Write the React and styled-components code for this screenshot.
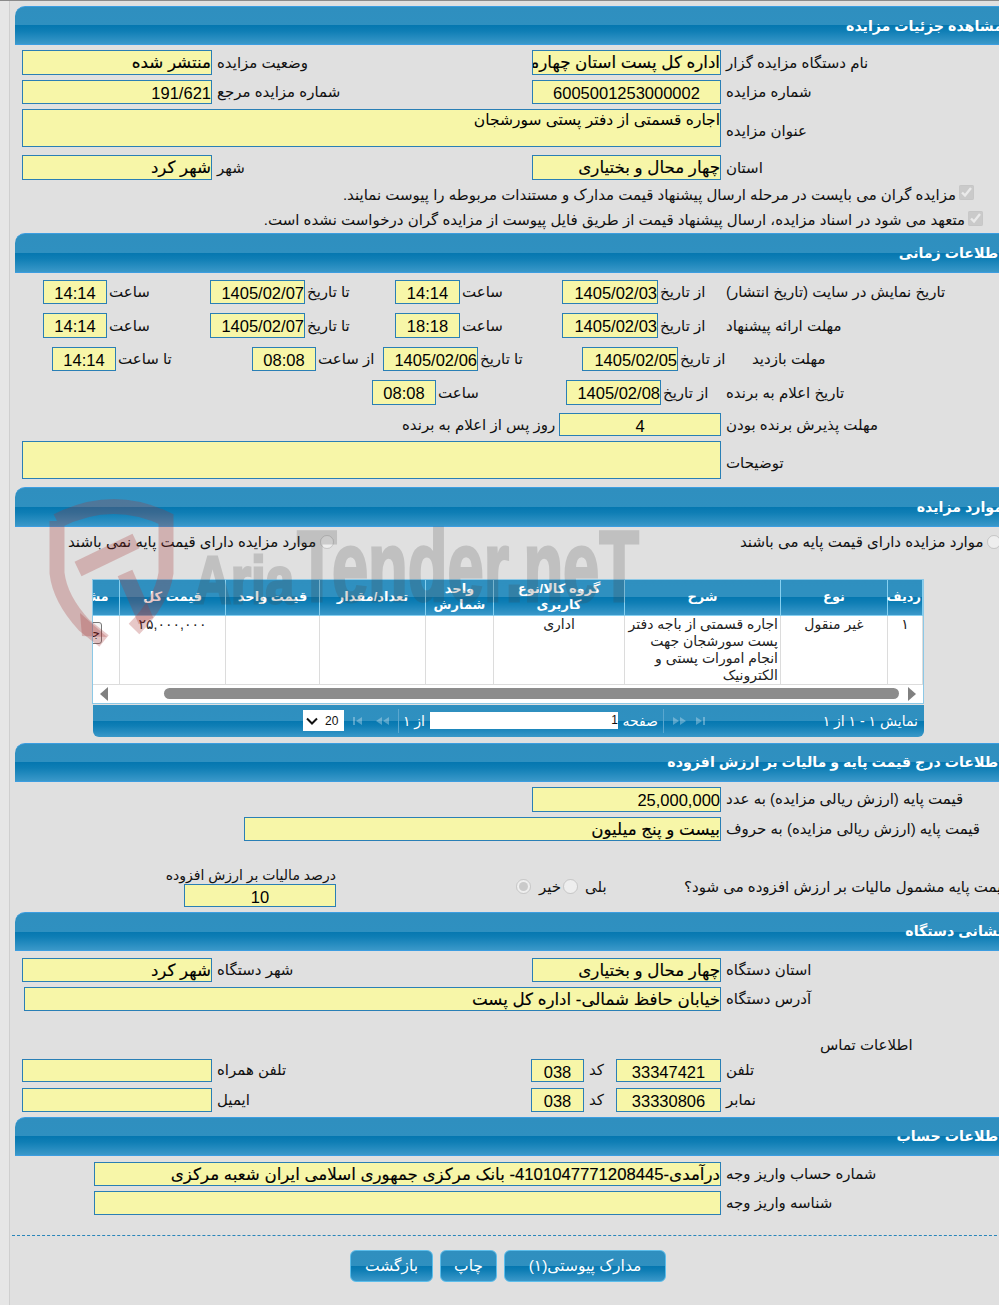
import styled, { createGlobalStyle } from "styled-components";

const fontStack = `"Liberation Sans", "DejaVu Sans", sans-serif`;

const GlobalStyle = createGlobalStyle`
  html, body { margin: 0; padding: 0; background: #e0e0e0; }
  body { font-family: ${fontStack}; color: #111; }
  * { box-sizing: border-box; }
`;

const barGradient = `linear-gradient(to bottom, #2f8fbf 0%, #2f90c0 50%, #0577b0 50%, #0f7eb5 65%, #3a98c9 100%)`;

const Page = styled.div`
  position: relative;
  display: flex;
  width: 999px;
  height: 1305px;
  overflow: hidden;
  border-top: 1px solid #8a8a8a;
  background: #e0e0e0;
`;

const Strip = styled.div`
  width: 10px;
  flex: none;
  background: #e6e6e6;
  border-right: 1px solid #cfcfcf;
`;

const Main = styled.div`
  width: 998px;
  flex: none;
  padding: 5px 0 0 5px;
`;

const Section = styled.section`
  width: 993px;
  margin-top: ${(p) => p.$top || 0}px;
`;

const Header = styled.h2`
  margin: 0;
  height: ${(p) => p.$h || 39}px;
  padding: 0 5px 0 0;
  display: flex;
  align-items: center;
  direction: rtl;
  font-size: 14.2px;
  font-weight: bold;
  color: #fff;
  white-space: nowrap;
  background: ${barGradient};
  border-top: 1px solid #3c9de0;
  border-bottom: 1px solid #3c9de0;
  border-top-left-radius: 10px;
`;

const Row = styled.div`
  display: flex;
  align-items: center;
  height: ${(p) => p.$h || 24}px;
  margin-top: ${(p) => p.$top ?? 5}px;
`;

const Val = styled.div`
  flex: none;
  width: ${(p) => p.$w}px;
  height: 100%;
  margin-left: ${(p) => p.$ml || 0}px;
  direction: rtl;
  overflow: hidden;
  white-space: nowrap;
  background: #f7f6a8;
  border: 1px solid #2a7fb5;
  font-size: ${(p) => (p.$fa ? 16.7 : 16.5)}px;
  -webkit-text-stroke: ${(p) => (p.$fa ? "0.15px" : "0")};
  line-height: 24px;
  color: #000;
  text-align: ${(p) => (p.$center ? "center" : "right")};
`;

const Area = styled(Val)`
  font-size: 15.5px;
  -webkit-text-stroke: 0;
  line-height: 20px;
  white-space: normal;
`;

const Lab = styled.div`
  flex: none;
  width: ${(p) => p.$w || 400}px;
  margin-left: ${(p) => p.$ml ?? 5}px;
  margin-top: ${(p) => p.$drop || 0}px;
  direction: rtl;
  text-align: left;
  white-space: nowrap;
  font-size: 15px;
  color: #111;
`;

const CheckRow = styled.label`
  display: flex;
  align-items: center;
  gap: 3px;
  direction: rtl;
  height: ${(p) => p.$h}px;
  margin-top: ${(p) => p.$top}px;
  padding-right: ${(p) => p.$pad}px;
  font-size: 15px;
  color: #111;
  white-space: nowrap;
`;

const Tick = styled.input`
  width: 15px;
  height: 15px;
  margin: 0 0 4px;
  flex: none;
`;

const Dot = styled.input`
  width: ${(p) => p.$size || 14}px;
  height: ${(p) => p.$size || 14}px;
  margin: 0 0 0 ${(p) => p.$ml || 0}px;
  flex: none;
`;

const VatBox = styled.div`
  flex: none;
  display: flex;
  flex-direction: column;
  align-items: flex-end;
  width: 168px;
  height: 100%;
  margin-left: 153px;
`;

const VatLabel = styled.div`
  height: 17px;
  direction: rtl;
  font-size: 14px;
  white-space: nowrap;
`;

const VatValue = styled(Val)`
  height: 23px;
  flex: none;
`;

const TableBlock = styled.div`
  width: 832px;
  margin: 30px 0 0 77px;
`;

const TableClip = styled.div`
  direction: rtl;
  overflow: hidden;
  background: #fff;
  border: 1px solid #8cc8e6;
`;

const ItemTable = styled.table`
  border-collapse: collapse;
  table-layout: fixed;
  width: 875px;
  direction: rtl;
`;

const Th = styled.th`
  width: ${(p) => p.$w}px;
  height: 35px;
  padding: 0 1px;
  font-size: 13px;
  line-height: 16px;
  color: #fff;
  font-weight: bold;
  background: ${barGradient};
  border-left: 1px solid #86d0f0;
  border-right: 1px solid #86d0f0;
  border-bottom: 1px solid #86d0f0;
`;

const Td = styled.td`
  height: 68px;
  padding: 0 2px;
  vertical-align: top;
  text-align: ${(p) => (p.$right ? "right" : "center")};
  font-size: 14px;
  line-height: 17px;
  color: #222;
  border: 1px solid #dcdcdc;
  border-top: none;
`;

const ViewButton = styled.button`
  display: block;
  width: 40px;
  height: 22px;
  margin: 6px 15px 0 0;
  padding: 0;
  font-family: inherit;
  font-size: 12px;
  background: #f4f4f4;
  border: 1px solid #777;
  border-radius: 3px;
`;

const Scroller = styled.div`
  display: flex;
  align-items: center;
  gap: 8px;
  height: 18px;
  padding: 0 7px;
  direction: ltr;
`;

const Thumb = styled.div`
  height: 11px;
  margin-left: ${(p) => p.$ml}px;
  width: ${(p) => p.$w}px;
  margin-right: 1px;
  border-radius: 6px;
  background: #8c8c8c;
`;

const Pager = styled.div`
  display: flex;
  align-items: center;
  height: 32px;
  margin: 1px 0 0 1px;
  color: #fff;
  font-size: 14px;
  background: ${barGradient};
  border-bottom-left-radius: 6px;
  border-bottom-right-radius: 6px;
`;

const PageSelect = styled.div`
  display: flex;
  align-items: center;
  gap: 7px;
  width: 41px;
  height: 21px;
  margin-left: 210px;
  padding-left: 3px;
  font-size: 12px;
  color: #111;
  background: #fff;
`;

const PagerIcons = styled.div`
  display: flex;
  align-items: center;
  gap: 8px;
  margin-left: ${(p) => p.$ml}px;
  opacity: 0.3;
`;

const PagerRule = styled.div`
  width: 1px;
  height: 24px;
  margin-left: ${(p) => p.$ml}px;
  background: #5aa7cf;
`;

const PagerText = styled.div`
  width: ${(p) => p.$w}px;
  flex: none;
  direction: rtl;
  white-space: nowrap;
  margin-left: ${(p) => p.$ml}px;
`;

const PagerInfo = styled.div`
  direction: rtl;
  white-space: nowrap;
  margin: 0 6px 0 auto;
`;

const PageInput = styled.div`
  width: 188px;
  height: 17px;
  margin-left: 5px;
  text-align: right;
  font-size: 12px;
  line-height: 17px;
  color: #111;
  background: #fff;
`;

const Dashed = styled.div`
  margin: 20px 0 0 -3px;
  width: 1000px;
  border-top: 1px dashed #2a86ba;
`;

const Buttons = styled.div`
  display: flex;
  gap: 7px;
  margin: 14px 0 0 335px;
`;

const ActionButton = styled.button`
  width: ${(p) => p.$w}px;
  height: 32px;
  padding: 0;
  font-family: inherit;
  font-size: 15.5px;
  color: #fff;
  background: ${barGradient};
  border: 1px solid #5cbdea;
  border-radius: 6px;
`;

const Watermark = styled.svg`
  position: absolute;
  left: 0;
  top: 0;
  pointer-events: none;
`;

function Triangle({ left }) {
  return (
    <svg width="8" height="14" viewBox="0 0 8 14">
      <path d={left ? "M8 0V14L0 7Z" : "M0 0V14L8 7Z"} fill="#808080" />
    </svg>
  );
}

function PagerIcon({ kind }) {
  const shapes = {
    first: "M1 1h2v8H1zM10 1v8L4 5z",
    prev: "M7 1v8L1 5zM14 1v8L8 5z",
    next: "M1 1v8l6-4zM8 1v8l6-4z",
    last: "M1 1v8l6-4zM8 1h2v8H8z",
  };
  return (
    <svg width="15" height="10" viewBox="0 0 15 10">
      <path d={shapes[kind]} fill="#fff" />
    </svg>
  );
}

const columns = [
  { title: "ردیف", w: 35 },
  { title: "نوع", w: 107 },
  { title: "شرح", w: 156 },
  { title: "گروه کالا/نوع کاربری", w: 131 },
  { title: "واحد شمارش", w: 68 },
  { title: "تعداد/مقدار", w: 106 },
  { title: "قیمت واحد", w: 94 },
  { title: "قیمت کل", w: 106 },
  { title: "مشاهده", w: 72 },
];

export default function App() {
  return (
    <>
      <GlobalStyle />
      <Page>
        <Strip />
        <Main>
          <Section>
            <Header>مشاهده جزئیات مزایده</Header>
            <Row $h={25}>
              <Val $ml={7} $w={190} $fa>منتشر شده</Val>
              <Lab $w={315}>وضعیت مزایده</Lab>
              <Val $w={189} $fa>اداره کل پست استان چهارمحال و بختیاری</Val>
              <Lab>نام دستگاه مزایده گزار</Lab>
            </Row>
            <Row>
              <Val $ml={7} $w={190}>191/621</Val>
              <Lab $w={315}>شماره مزایده مرجع</Lab>
              <Val $w={189} $center>6005001253000002</Val>
              <Lab>شماره مزایده</Lab>
            </Row>
            <Row $h={38}>
              <Area $ml={7} $w={699}>اجاره قسمتی از دفتر پستی سورشجان</Area>
              <Lab $drop={6}>عنوان مزایده</Lab>
            </Row>
            <Row $h={25} $top={8}>
              <Val $ml={7} $w={190} $fa>شهر کرد</Val>
              <Lab $w={315}>شهر</Lab>
              <Val $w={189} $fa>چهار محال و بختیاری</Val>
              <Lab>استان</Lab>
            </Row>
            <CheckRow $h={23} $top={3} $pad={34}>
              <Tick type="checkbox" checked disabled readOnly />
              مزایده گران می بایست در مرحله ارسال پیشنهاد قیمت مدارک و مستندات مربوطه را پیوست نمایند.
            </CheckRow>
            <CheckRow $h={24} $top={2} $pad={25}>
              <Tick type="checkbox" checked disabled readOnly />
              متعهد می شود در اسناد مزایده، ارسال پیشنهاد قیمت از طریق فایل پیوست از مزایده گران درخواست نشده است.
            </CheckRow>
          </Section>

          <Section $top={1}>
            <Header $h={40}>اطلاعات زمانی</Header>
            <Row $top={7}>
              <Val $ml={28} $w={64} $center>14:14</Val>
              <Lab $ml={2} $w={101}>ساعت</Lab>
              <Val $w={95}>1405/02/07</Val>
              <Lab $ml={2} $w={88}>تا تاریخ</Lab>
              <Val $w={65} $center>14:14</Val>
              <Lab $ml={2} $w={100}>ساعت</Lab>
              <Val $w={96}>1405/02/03</Val>
              <Lab $ml={2} $w={66}>از تاریخ</Lab>
              <Lab $ml={0}>تاریخ نمایش در سایت (تاریخ انتشار)</Lab>
            </Row>
            <Row $h={25} $top={9}>
              <Val $ml={28} $w={64} $center>14:14</Val>
              <Lab $ml={2} $w={101}>ساعت</Lab>
              <Val $w={95}>1405/02/07</Val>
              <Lab $ml={2} $w={88}>تا تاریخ</Lab>
              <Val $w={65} $center>18:18</Val>
              <Lab $ml={2} $w={100}>ساعت</Lab>
              <Val $w={96}>1405/02/03</Val>
              <Lab $ml={2} $w={66}>از تاریخ</Lab>
              <Lab $ml={0}>مهلت ارائه پیشنهاد</Lab>
            </Row>
            <Row $top={9}>
              <Val $ml={37} $w={64} $center>14:14</Val>
              <Lab $ml={2} $w={134}>تا ساعت</Lab>
              <Val $w={64} $center>08:08</Val>
              <Lab $ml={2} $w={65}>از ساعت</Lab>
              <Val $w={95}>1405/02/06</Val>
              <Lab $ml={2} $w={102}>تا تاریخ</Lab>
              <Val $w={96}>1405/02/05</Val>
              <Lab $ml={2} $w={72}>از تاریخ</Lab>
              <Lab $ml={0}>مهلت بازدید</Lab>
            </Row>
            <Row $h={25} $top={9}>
              <Val $ml={357} $w={64} $center>08:08</Val>
              <Lab $ml={2} $w={128}>ساعت</Lab>
              <Val $w={95}>1405/02/08</Val>
              <Lab $ml={2} $w={63}>از تاریخ</Lab>
              <Lab $ml={0}>تاریخ اعلام به برنده</Lab>
            </Row>
            <Row $h={23} $top={8}>
              <Lab $ml={387} $w={157}>روز پس از اعلام به برنده</Lab>
              <Val $w={162} $center>4</Val>
              <Lab>مهلت پذیرش برنده بودن</Lab>
            </Row>
            <Row $h={38}>
              <Area $ml={7} $w={699} />
              <Lab $drop={6}>توضیحات</Lab>
            </Row>
          </Section>

          <Section $top={8}>
            <Header $h={40}>موارد مزایده</Header>
            <Row $h={14} $top={8}>
              <Lab $ml={53} $w={252}>موارد مزایده دارای قیمت پایه نمی باشند</Lab>
              <Dot type="radio" disabled />
              <Lab $ml={406} $w={245}>موارد مزایده دارای قیمت پایه می باشند</Lab>
              <Dot type="radio" disabled $ml={2} />
            </Row>
            <TableBlock>
              <TableClip>
                <ItemTable>
                  <thead>
                    <tr>
                      {columns.map((c) => (
                        <Th key={c.title} $w={c.w}>{c.title}</Th>
                      ))}
                    </tr>
                  </thead>
                  <tbody>
                    <tr>
                      <Td>۱</Td>
                      <Td>غیر منقول</Td>
                      <Td $right>اجاره قسمتی از باجه دفتر پست سورشجان جهت انجام امورات پستی و الکترونیک</Td>
                      <Td>اداری</Td>
                      <Td />
                      <Td />
                      <Td />
                      <Td>۲۵,۰۰۰,۰۰۰</Td>
                      <Td><ViewButton>جزئیات</ViewButton></Td>
                    </tr>
                  </tbody>
                </ItemTable>
                <Scroller>
                  <Triangle left />
                  <Thumb $ml={48} $w={737} />
                  <Triangle />
                </Scroller>
              </TableClip>
              <Pager>
                <PageSelect>
                  <svg width="12" height="8" viewBox="0 0 12 8">
                    <path d="M1 1.5 6 6.5 11 1.5" fill="none" stroke="#111" strokeWidth="2" />
                  </svg>
                  20
                </PageSelect>
                <PagerIcons $ml={8}>
                  <PagerIcon kind="first" />
                  <PagerIcon kind="prev" />
                </PagerIcons>
                <PagerRule $ml={8} />
                <PagerText $ml={6} $w={20}>از ۱</PagerText>
                <PageInput>1</PageInput>
                <PagerText $ml={6} $w={34}>صفحه</PagerText>
                <PagerRule $ml={5} />
                <PagerIcons $ml={8}>
                  <PagerIcon kind="next" />
                  <PagerIcon kind="last" />
                </PagerIcons>
                <PagerInfo>نمایش ۱ - ۱ از ۱</PagerInfo>
              </Pager>
            </TableBlock>
          </Section>

          <Section $top={6}>
            <Header>اطلاعات درج قیمت پایه و مالیات بر ارزش افزوده</Header>
            <Row $h={25}>
              <Val $ml={517} $w={189}>25,000,000</Val>
              <Lab>قیمت پایه (ارزش ریالی مزایده) به عدد</Lab>
            </Row>
            <Row>
              <Val $ml={229} $w={477} $fa>بیست و پنج میلیون</Val>
              <Lab>قیمت پایه (ارزش ریالی مزایده) به حروف</Lab>
            </Row>
            <Row $h={40} $top={26}>
              <VatBox>
                <VatLabel>درصد مالیات بر ارزش افزوده</VatLabel>
                <VatValue $w={152} $center>10</VatValue>
              </VatBox>
              <Dot type="radio" checked disabled readOnly $size={15} $ml={180} />
              <Lab $ml={8} $w={24}>خیر</Lab>
              <Dot type="radio" disabled $size={15} />
              <Lab $ml={7} $w={99}>بلی</Lab>
              <Lab $ml={0}>قیمت پایه مشمول مالیات بر ارزش افزوده می شود؟</Lab>
            </Row>
          </Section>

          <Section $top={5}>
            <Header>نشانی دستگاه</Header>
            <Row $top={7}>
              <Val $ml={7} $w={190} $fa>شهر کرد</Val>
              <Lab $w={315}>شهر دستگاه</Lab>
              <Val $w={189} $fa>چهار محال و بختیاری</Val>
              <Lab>استان دستگاه</Lab>
            </Row>
            <Row>
              <Val $ml={9} $w={697} $fa>خیابان حافظ شمالی- اداره کل پست</Val>
              <Lab>آدرس دستگاه</Lab>
            </Row>
            <Row $h={20} $top={24}>
              <Lab $ml={805} $w={100}>اطلاعات تماس</Lab>
            </Row>
            <Row $h={23} $top={4}>
              <Val $ml={7} $w={190} />
              <Lab $w={314}>تلفن همراه</Lab>
              <Val $w={53} $center>038</Val>
              <Lab $w={27}>کد</Lab>
              <Val $w={105} $center>33347421</Val>
              <Lab>تلفن</Lab>
            </Row>
            <Row $top={6}>
              <Val $ml={7} $w={190} />
              <Lab $w={314}>ایمیل</Lab>
              <Val $w={53} $center>038</Val>
              <Lab $w={27}>کد</Lab>
              <Val $w={105} $center>33330806</Val>
              <Lab>نمابر</Lab>
            </Row>
          </Section>

          <Section $top={5}>
            <Header>اطلاعات حساب</Header>
            <Row $top={6}>
              <Val $ml={79} $w={627} $fa>درآمدی-4101047771208445- بانک مرکزی جمهوری اسلامی ایران شعبه مرکزی</Val>
              <Lab>شماره حساب واریز وجه</Lab>
            </Row>
            <Row>
              <Val $ml={79} $w={627} />
              <Lab>شناسه واریز وجه</Lab>
            </Row>
          </Section>

          <Dashed />
          <Buttons>
            <ActionButton $w={83}>بازگشت</ActionButton>
            <ActionButton $w={57}>چاپ</ActionButton>
            <ActionButton $w={162}>مدارک پیوستی(۱)</ActionButton>
          </Buttons>
        </Main>

        <Watermark width="999" height="700" viewBox="0 0 999 700">
          <g fill="none" stroke="#a83232" strokeOpacity="0.27">
            <path d="M57 520Q112 492 166 518V572Q162 600 134 628M57 520V572Q60 598 84 624L104 640" strokeWidth="15" />
            <path d="M78 568 136 540M125 572 146 620" strokeWidth="16" />
          </g>
          <path d="M80 612 107 636 82 635Z" fill="#a83232" fillOpacity="0.27" />
          <g opacity="0.2" fill="#444" stroke="#444" strokeWidth="3" fontFamily="Liberation Sans" fontWeight="bold">
            <text x="194" y="602" fontSize="66" textLength="100" lengthAdjust="spacingAndGlyphs">Aria</text>
            <text x="297" y="600" fontSize="100" textLength="342" lengthAdjust="spacingAndGlyphs">Tender.neT</text>
          </g>
        </Watermark>
      </Page>
    </>
  );
}
